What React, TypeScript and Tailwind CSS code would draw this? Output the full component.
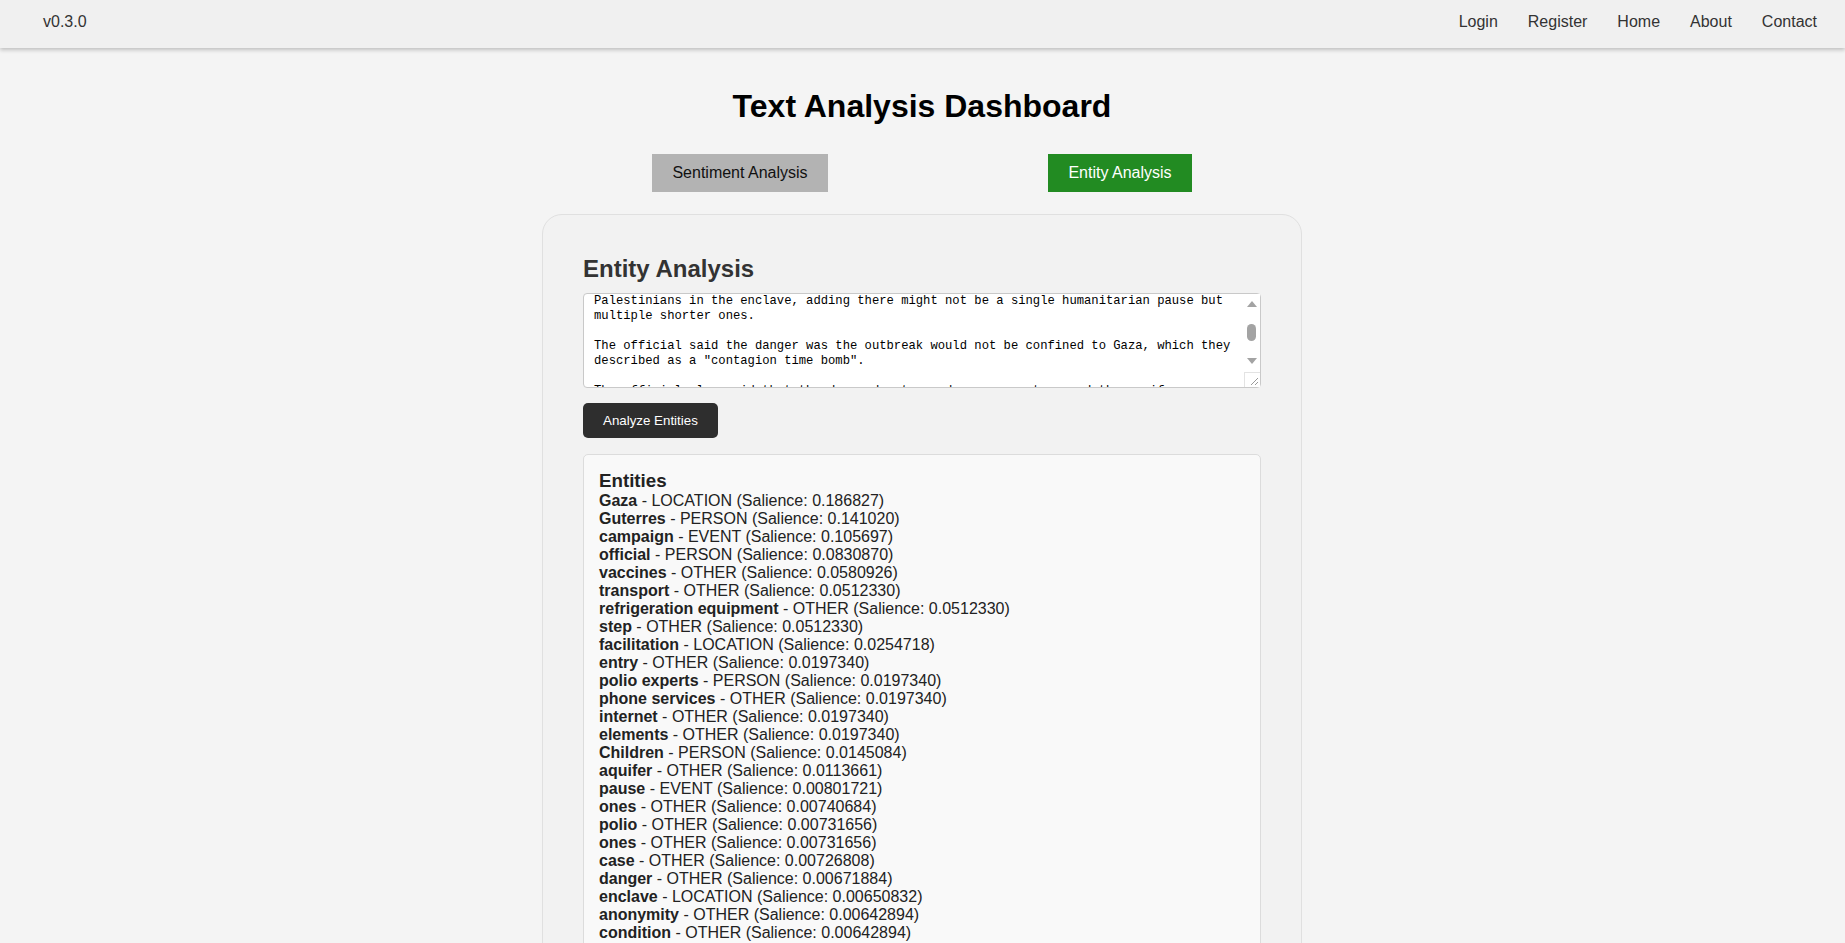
import React, { useLayoutEffect, useRef } from "react";

const entities: [string, string, string][] = [
  ["Gaza", "LOCATION", "0.186827"],
  ["Guterres", "PERSON", "0.141020"],
  ["campaign", "EVENT", "0.105697"],
  ["official", "PERSON", "0.0830870"],
  ["vaccines", "OTHER", "0.0580926"],
  ["transport", "OTHER", "0.0512330"],
  ["refrigeration equipment", "OTHER", "0.0512330"],
  ["step", "OTHER", "0.0512330"],
  ["facilitation", "LOCATION", "0.0254718"],
  ["entry", "OTHER", "0.0197340"],
  ["polio experts", "PERSON", "0.0197340"],
  ["phone services", "OTHER", "0.0197340"],
  ["internet", "OTHER", "0.0197340"],
  ["elements", "OTHER", "0.0197340"],
  ["Children", "PERSON", "0.0145084"],
  ["aquifer", "OTHER", "0.0113661"],
  ["pause", "EVENT", "0.00801721"],
  ["ones", "OTHER", "0.00740684"],
  ["polio", "OTHER", "0.00731656"],
  ["ones", "OTHER", "0.00731656"],
  ["case", "OTHER", "0.00726808"],
  ["danger", "OTHER", "0.00671884"],
  ["enclave", "LOCATION", "0.00650832"],
  ["anonymity", "OTHER", "0.00642894"],
  ["condition", "OTHER", "0.00642894"],
  ["outbreak", "EVENT", "0.00598411"],
  ["UN", "ORGANIZATION", "0.00512367"],
  ["Palestinians", "PERSON", "0.00488120"],
  ["time bomb", "OTHER", "0.00421936"],
  ["water", "OTHER", "0.00398452"],
];

const articleText =
  "UN Secretary-General Antonio Guterres has called for humanitarian pauses in Gaza\n" +
  "to allow a polio vaccination campaign to go ahead, after the first case of the\n" +
  "disease in the territory in 25 years was confirmed.\n" +
  "\n" +
  "A UN official, speaking on condition of anonymity, said the campaign would need\n" +
  "the entry of vaccines, refrigeration equipment and transport, as well as polio\n" +
  "experts, and the facilitation of phone services and internet to reach\n" +
  "Palestinians in the enclave, adding there might not be a single humanitarian pause but multiple shorter ones.\n" +
  "\n" +
  "The official said the danger was the outbreak would not be confined to Gaza, which they described as a \"contagion time bomb\".\n" +
  "\n" +
  "The official also said that the damaged water and sewage systems and the aquifer were elements that helped the virus spread, and that children were most at risk.\n" +
  "\n" +
  "Guterres said a first step would be to get vaccines into Gaza as soon as possible.";

export default function App() {
  const taRef = useRef<HTMLTextAreaElement>(null);
  useLayoutEffect(() => {
    if (taRef.current) taRef.current.scrollTop = 115;
  }, []);

  return (
    <div
      className="min-h-screen bg-[#f4f4f4] text-[#222]"
      style={{ fontFamily: '"Liberation Sans", Arial, sans-serif' }}
    >
      <header className="h-[48px] bg-[#f0f0f0] shadow-[0_2px_4px_rgba(0,0,0,0.22)] flex justify-between items-start pt-[13px] pl-[43px] pr-[28px] text-[16px] leading-[18px] text-[#333] relative z-10">
        <div>v0.3.0</div>
        <nav className="flex gap-[30px]">
          <a href="#">Login</a>
          <a href="#">Register</a>
          <a href="#">Home</a>
          <a href="#">About</a>
          <a href="#">Contact</a>
        </nav>
      </header>

      <main className="flex flex-col items-center pr-[1px]">
        <h1 className="mt-[40px] text-[32px] leading-[37px] font-bold text-black">
          Text Analysis Dashboard
        </h1>

        <div className="w-[760px] mt-[29px] flex justify-around">
          <button className="h-[38px] px-[20px] bg-[#b3b3b3] text-[16px] text-[#111]">
            Sentiment Analysis
          </button>
          <button className="h-[38px] px-[20px] bg-[#228b22] text-[16px] text-white">
            Entity Analysis
          </button>
        </div>

        <section className="mt-[22px] w-[760px] bg-[#f2f2f2] border border-[#e0e0e0] rounded-[20px] p-[40px]">
          <h2 className="text-[24px] leading-[28px] font-bold text-[#333] mb-[10px]">
            Entity Analysis
          </h2>

          <div className="relative h-[95px]">
            <textarea
              ref={taRef}
              defaultValue={articleText}
              className="block w-full h-full resize-none overflow-hidden bg-white border border-[#c9c9c9] rounded-[4px] pt-[10px] pb-[10px] pl-[10px] pr-[27px] text-[12.2px] leading-[15px] text-black outline-none"
              style={{ fontFamily: '"Liberation Mono", "DejaVu Sans Mono", monospace' }}
            />
            <div className="absolute right-[1px] top-[1px] bottom-[1px] w-[16px] bg-white">
              <svg className="absolute left-[3px] top-[7px]" width="10" height="6" viewBox="0 0 10 6">
                <polygon points="5,0 10,6 0,6" fill="#a3a3a3" />
              </svg>
              <div className="absolute left-[3px] top-[30px] w-[9px] h-[17px] rounded-full bg-[#a3a3a3]" />
              <svg className="absolute left-[3px] top-[64px]" width="10" height="6" viewBox="0 0 10 6">
                <polygon points="0,0 10,0 5,6" fill="#a3a3a3" />
              </svg>
              <div className="absolute left-0 right-0 bottom-0 h-[15px] border-l border-t border-[#e3e3e3] bg-white">
                <svg className="absolute right-[1px] bottom-[1px]" width="11" height="11" viewBox="0 0 11 11">
                  <line x1="10" y1="3" x2="3" y2="10" stroke="#9a9a9a" strokeWidth="1" />
                  <line x1="10" y1="7" x2="7" y2="10" stroke="#9a9a9a" strokeWidth="1" />
                </svg>
              </div>
            </div>
          </div>

          <button className="mt-[15px] h-[35px] px-[20px] rounded-[5px] bg-[#2e2e2e] text-white text-[13.33px] block">
            Analyze Entities
          </button>

          <div className="mt-[16px] bg-[#f9f9f9] border border-[#dcdcdc] rounded-[5px] p-[15px] text-[16px] leading-[18px] text-[#222]">
            <h3 className="text-[18.72px] leading-[21.5px] font-bold">Entities</h3>
            <ul>
              {entities.map(([name, type, sal], i) => (
                <li key={i}>
                  <strong className="font-bold">{name}</strong> - {type} (Salience: {sal})
                </li>
              ))}
            </ul>
          </div>
        </section>
      </main>
    </div>
  );
}
